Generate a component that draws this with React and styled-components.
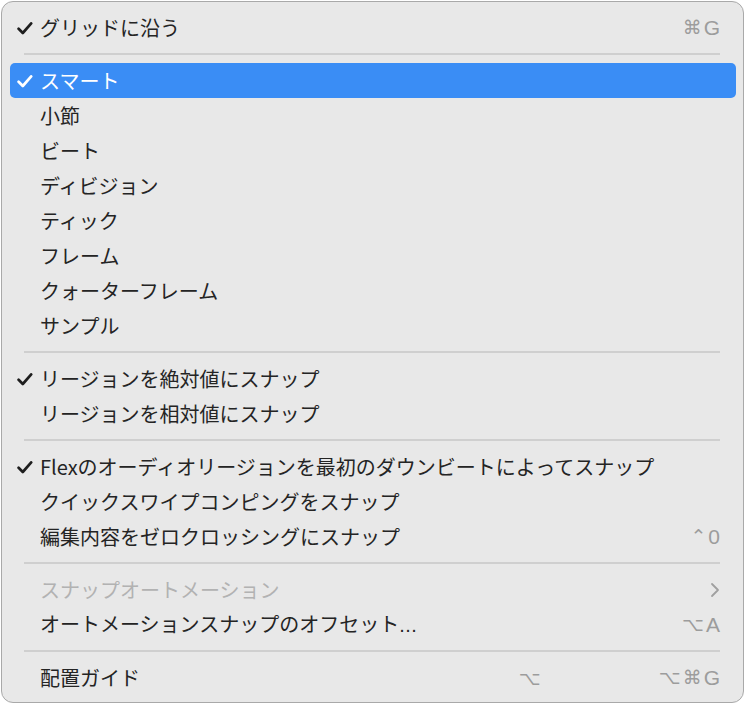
import React from "react";
import styled, { createGlobalStyle } from "styled-components";

const GlobalStyle = createGlobalStyle`
  html, body { margin: 0; padding: 0; background: #ffffff; }
  body { font-family: "Noto Sans CJK JP", "Noto Sans", sans-serif; }
`;

const Menu = styled.div`
  box-sizing: border-box;
  margin: 1px 0 0 1px;
  width: 743px;
  height: 702px;
  background: #e8e8e8;
  border: 1px solid #a9a9a9;
  border-radius: 12px;
  padding: 8px 7px 7px 8px;
  display: flex;
  flex-direction: column;
  overflow: hidden;
`;

const Row = styled.div`
  height: 35px;
  flex: 0 0 35px;
  display: flex;
  align-items: center;
  padding: 0 16px 0 7px;
  border-radius: 5px;
  background: ${(p) => (p.$active ? "#3a8df5" : "transparent")};
  color: ${(p) => (p.$active ? "#ffffff" : p.$disabled ? "#b2b2b2" : "#242424")};
`;

const CheckCol = styled.span`
  width: 23px;
  flex: 0 0 23px;
  display: flex;
  align-items: center;
  height: 100%;
`;

const Label = styled.span`
  flex: 1;
  font-family: "Noto Sans CJK JP", "Noto Sans", sans-serif;
  font-size: 20px;
  line-height: 35px;
  white-space: nowrap;
`;

const Ellipsis = styled.span`
  font-family: "Liberation Sans", sans-serif;
  letter-spacing: 0.5px;
`;

const Shortcut = styled.span`
  font-family: "Liberation Sans", "DejaVu Sans", sans-serif;
  font-size: 21px;
  line-height: 35px;
  color: ${(p) => (p.$active ? "#ffffff" : "#9c9c9c")};
  white-space: nowrap;
  display: flex;
  align-items: center;
  gap: 2px;
`;

const ModKey = styled.span`
  font-family: "DejaVu Sans", sans-serif;
  font-size: 19px;
`;

const AltColumn = styled.span`
  font-family: "DejaVu Sans", sans-serif;
  font-size: 19px;
  color: #9c9c9c;
  margin-right: 118px;
`;

const Separator = styled.div`
  flex: 0 0 18px;
  height: 18px;
  display: flex;
  align-items: center;
  padding: 0 16px 0 14px;
  &::after {
    content: "";
    display: block;
    width: 100%;
    height: 1.5px;
    background: #cfcfcf;
  }
`;

const Check = ({ color }) => (
  <svg width="16" height="13" viewBox="0 0 16 13" style={{ marginTop: 1 }}>
    <path
      d="M1.6 6.8 L5.8 11 L14.2 1.4"
      fill="none"
      stroke={color}
      strokeWidth="2.7"
      strokeLinecap="round"
      strokeLinejoin="round"
    />
  </svg>
);

const Chevron = () => (
  <svg width="10" height="16" viewBox="0 0 10 16">
    <path
      d="M2 2 L8 8 L2 14"
      fill="none"
      stroke="#a0a0a0"
      strokeWidth="1.8"
      strokeLinecap="round"
      strokeLinejoin="round"
    />
  </svg>
);

const items = [
  { label: "グリッドに沿う", checked: true, keys: ["⌘", "G"] },
  { sep: true },
  { label: "スマート", checked: true, active: true },
  { label: "小節" },
  { label: "ビート" },
  { label: "ディビジョン" },
  { label: "ティック" },
  { label: "フレーム" },
  { label: "クォーターフレーム" },
  { label: "サンプル" },
  { sep: true },
  { label: "リージョンを絶対値にスナップ", checked: true },
  { label: "リージョンを相対値にスナップ" },
  { sep: true },
  { label: "Flexのオーディオリージョンを最初のダウンビートによってスナップ", checked: true },
  { label: "クイックスワイプコンピングをスナップ" },
  { label: "編集内容をゼロクロッシングにスナップ", keys: ["⌃", "0"] },
  { sep: true },
  { label: "スナップオートメーション", disabled: true, submenu: true },
  { label: "オートメーションスナップのオフセット", ellipsis: true, keys: ["⌥", "A"] },
  { sep: true },
  { label: "配置ガイド", alt: "⌥", keys: ["⌥", "⌘", "G"] },
];

const isMod = (k) => ["⌘", "⌥", "⌃"].includes(k);

export default function App() {
  return (
    <>
      <GlobalStyle />
      <Menu>
        {items.map((it, i) =>
          it.sep ? (
            <Separator key={i} />
          ) : (
            <Row key={i} $active={it.active} $disabled={it.disabled}>
              <CheckCol>
                {it.checked && <Check color={it.active ? "#ffffff" : "#1e1e1e"} />}
              </CheckCol>
              <Label>
                {it.label}
                {it.ellipsis && <Ellipsis>...</Ellipsis>}
              </Label>
              {it.alt && <AltColumn>{it.alt}</AltColumn>}
              {it.keys && (
                <Shortcut $active={it.active}>
                  {it.keys.map((k, j) =>
                    isMod(k) ? <ModKey key={j}>{k}</ModKey> : <span key={j}>{k}</span>
                  )}
                </Shortcut>
              )}
              {it.submenu && <Chevron />}
            </Row>
          )
        )}
      </Menu>
    </>
  );
}
